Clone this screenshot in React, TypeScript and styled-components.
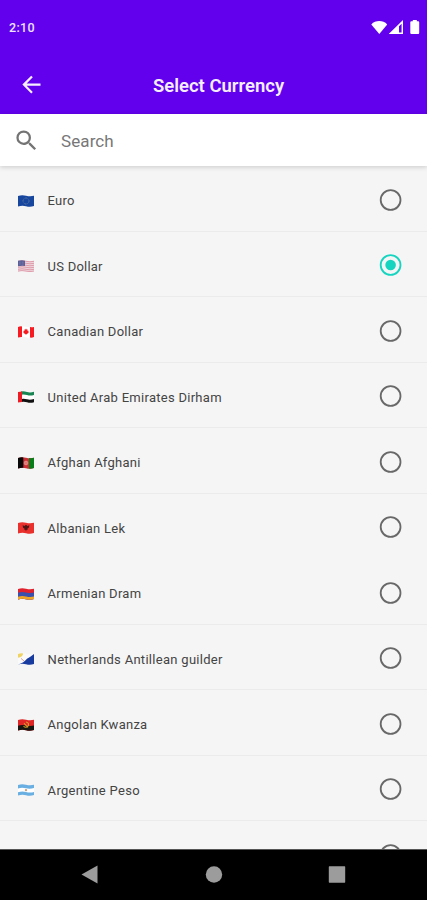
import React, { useState } from 'react';
import styled, { createGlobalStyle } from 'styled-components';

const GlobalStyle = createGlobalStyle`
  * { box-sizing: border-box; }
  body { margin: 0; background: #f5f5f5; }
`;

const Screen = styled.div`
  display: flex;
  flex-direction: column;
  width: 427px;
  height: 900px;
  overflow: hidden;
  background: #f5f5f5;
  font-family: Roboto, 'Liberation Sans', sans-serif;
`;

const StatusBar = styled.div`
  display: flex;
  flex: none;
  align-items: center;
  justify-content: space-between;
  height: 56px;
  padding: 0 6px 0 9px;
  background: #6200ee;
`;

const Clock = styled.span`
  color: #eee3ff;
  font-size: 12.5px;
  font-weight: 500;
  letter-spacing: 0.3px;
  line-height: 16px;
`;

const StatusIcons = styled.svg`
  display: block;
  width: 50px;
  height: 16px;
`;

const AppBar = styled.header`
  display: grid;
  flex: none;
  grid-template-columns: 64px 1fr 54px;
  align-items: center;
  height: 58px;
  background: #6200ee;
`;

const BackButton = styled.button`
  display: flex;
  padding: 0 0 0 20px;
  border: 0;
  background: none;
`;

const Title = styled.h1`
  margin: 0;
  padding-top: 1px;
  color: #f5eeff;
  font-size: 18.5px;
  font-weight: 600;
  line-height: 24px;
  text-align: center;
  white-space: nowrap;
`;

const SearchBar = styled.label`
  position: relative;
  z-index: 1;
  display: flex;
  flex: none;
  align-items: center;
  gap: 21px;
  height: 52px;
  padding: 1px 16px 0 13px;
  background: #fff;
  box-shadow: 0 1px 5px rgba(0, 0, 0, 0.18);
`;

const SearchInput = styled.input`
  flex: 1;
  min-width: 0;
  padding: 1px 0 0;
  border: 0;
  outline: 0;
  background: transparent;
  color: #444;
  font: 400 17px/22px Roboto, sans-serif;
  letter-spacing: 0.1px;
  &::placeholder { color: #777; opacity: 1; }
`;

const CurrencyList = styled.div`
  flex: 1;
  min-height: 0;
  padding-top: 0.4px;
  overflow: hidden;
`;

const CurrencyRow = styled.div<{ $divided: boolean }>`
  display: grid;
  grid-template-columns: 16px 1fr 24px;
  column-gap: 13.6px;
  align-items: center;
  height: 65.5px;
  padding: 2px 24px 0 18px;
  border-bottom: 1px solid ${(p) => (p.$divided ? '#ebebeb' : 'transparent')};
`;

const FlagIcon = styled.svg`
  display: block;
  width: 16px;
  height: 12px;
  margin-top: 2px;
`;

const CurrencyName = styled.span<{ $spacing: number }>`
  margin-top: 3px;
  color: #444;
  font-size: 13px;
  letter-spacing: ${(p) => p.$spacing}px;
  line-height: 18px;
  white-space: nowrap;
`;

const RadioButton = styled.button`
  display: flex;
  padding: 0;
  border: 0;
  background: none;
`;

const NavBar = styled.nav`
  display: grid;
  flex: none;
  grid-template-columns: 180px 67px 180px;
  align-items: center;
  justify-items: center;
  height: 51px;
  border-top: 1px solid #555;
  background: #000;
`;

const NavIcon = styled.svg`
  display: block;
  width: 20px;
  height: 20px;
`;

type FlagCode = 'eu' | 'us' | 'ca' | 'ae' | 'af' | 'al' | 'am' | 'bq' | 'ao' | 'ar' | 'aw';

const flags: Record<FlagCode, React.ReactNode> = {
  eu: (
    <>
      <path fill="#17469e" d={wave(0, 12)} />
      <circle cx="8" cy="6" r="3" fill="none" stroke="#7f92a0" strokeWidth=".8" strokeDasharray=".8 .77" />
    </>
  ),
  us: (
    <>
      <path fill="#eed8df" d={wave(0, 12)} />
      <path fill="none" stroke="#d98a9b" strokeWidth=".8" d="M0 1.3Q4 .3 8 1.3T16 1.3M0 3.3Q4 2.3 8 3.3T16 3.3M0 5.3Q4 4.3 8 5.3T16 5.3M0 7.3Q4 6.3 8 7.3T16 7.3M0 9.3Q4 8.3 8 9.3T16 9.3M0 11.1Q4 10.1 8 11.1T16 11.1" />
      <path fill="#5b5f98" d="M0 .8Q4-.1 7 .7V6Q4 5.3 0 6.2z" />
      <path stroke="#9ea0c2" strokeWidth=".5" strokeDasharray=".7 .8" d="M1 2.2h5M1 4h5" />
    </>
  ),
  ca: (
    <>
      <path fill="#fff" d={wave(0, 12)} />
      <path fill="#f51b20" d="M0 .9Q2 .2 4 .4V11Q2 10.9 0 11.6zM12 1.1Q14 1.4 16 .9V11.1Q14 11.9 12 11.6zM8 2.4l.8 1.4.9-.4-.2 1.6 1.2-.2-.4 1.5.5.5-2 1.2H8.3V9h-.6V8H7.2l-2-1.2.5-.5-.4-1.5 1.2.2-.2-1.6.9.4z" />
    </>
  ),
  ae: (
    <>
      <path fill="#fff" d={wave(0, 12)} />
      <path fill="#178451" d="M3 .5Q6 0 9 1T16 .8V4Q12 5 9 4T3 3.7z" />
      <path fill="#111" d="M3 8Q6 7.3 9 8.3T16 8V11.2Q12 12.2 9 11.2T3 11z" />
      <path fill="#ed1c24" d="M0 .9L4 .4V10.9L0 11.6z" />
    </>
  ),
  af: (
    <>
      <path fill="#c92f35" d={wave(0, 12)} />
      <path fill="#090909" d="M0 .9Q3 0 5.3.4V10.9Q3 10.7 0 11.6z" />
      <path fill="#087d18" d="M11 1.1Q14 1.5 16 .8V11.1Q13 12 11 11.6z" />
      <circle cx="8" cy="6" r="1.9" fill="#e37572" stroke="#f2aaa4" strokeWidth=".5" />
    </>
  ),
  al: (
    <>
      <path fill="#e9302d" d={wave(0, 12)} />
      <path fill="#4e1517" d="M4.6 3.3l2.1.6.5-1.1.8.8.8-.8.5 1.1 2.1-.6-.6 2.4-1.5 1 .4 1.3-1.2-.3L8 9.4l-.6-1.7-1.1.3.3-1.3-1.5-1z" />
    </>
  ),
  am: (
    <>
      <path fill="#df222d" d={wave(0, 12)} />
      <path fill="#3951ad" d={wave(3.8, 12)} />
      <path fill="#efa526" d={wave(7.8, 12)} />
    </>
  ),
  bq: (
    <>
      <path fill="#fafafa" d={wave(0, 12)} />
      <path fill="#183b9f" d="M16 .9V11.1Q12 12.3 8 11.2T0 11.5Q6 9.7 9 5.8Q12 4 16 .9z" />
      <path fill="#f0d365" d="M0 .9Q3 0 5.1.5Q5 3.8 0 4.8z" />
      <path stroke="#d4a09f" d="M3 5.4l3 2.6" />
    </>
  ),
  ao: (
    <>
      <path fill="#df2525" d={wave(0, 12)} />
      <path fill="#191510" d={wave(5.8, 12)} />
      <path fill="none" stroke="#d5a029" strokeWidth="1.1" d="M8 3q4 1 1.8 4.4Q8 9.2 5.5 7.4M6 4.4l4 4" />
    </>
  ),
  ar: (
    <>
      <path fill="#69afe2" d={wave(0, 12)} />
      <path fill="#fff" d="M0 4.4Q4 3.3 8 4.3T16 4V8Q12 9 8 8T0 8.3z" />
      <circle cx="8" cy="6.1" r="1.2" fill="#c7a282" />
    </>
  ),
  aw: <path fill="#4189dd" d={wave(0, 12)} />,
};

/** Outline of a waving flag band between two heights. */
function wave(top: number, bottom: number) {
  return `M0 ${top + 0.9}Q4 ${top - 0.4} 8 ${top + 0.7}T16 ${top + 0.8}V${bottom - 0.9}Q12 ${bottom + 0.4} 8 ${bottom - 0.8}T0 ${bottom - 0.4}z`;
}

interface Currency {
  flag: FlagCode;
  name: string;
  spacing: number;
  divided: boolean;
}

const currencies: Currency[] = [
  { flag: 'eu', name: 'Euro', spacing: 0.2, divided: true },
  { flag: 'us', name: 'US Dollar', spacing: 0.22, divided: true },
  { flag: 'ca', name: 'Canadian Dollar', spacing: 0.28, divided: true },
  { flag: 'ae', name: 'United Arab Emirates Dirham', spacing: 0.28, divided: true },
  { flag: 'af', name: 'Afghan Afghani', spacing: 0.25, divided: true },
  { flag: 'al', name: 'Albanian Lek', spacing: 0.28, divided: false },
  { flag: 'am', name: 'Armenian Dram', spacing: 0.28, divided: true },
  { flag: 'bq', name: 'Netherlands Antillean guilder', spacing: 0.29, divided: true },
  { flag: 'ao', name: 'Angolan Kwanza', spacing: 0.25, divided: true },
  { flag: 'ar', name: 'Argentine Peso', spacing: 0.31, divided: true },
  { flag: 'aw', name: '', spacing: 0.3, divided: false },
];

function Radio({ checked, onClick }: { checked: boolean; onClick: () => void }) {
  const color = checked ? '#16d5c0' : '#686868';
  return (
    <RadioButton role="radio" aria-checked={checked} onClick={onClick}>
      <svg width="24" height="24" viewBox="0 0 24 24">
        <circle cx="11.6" cy="12" r="9.9" fill="none" stroke={color} strokeWidth="1.8" />
        {checked && <circle cx="11.6" cy="12" r="5.3" fill={color} />}
      </svg>
    </RadioButton>
  );
}

export default function App() {
  const [selected, setSelected] = useState<FlagCode>('us');
  return (
    <>
      <GlobalStyle />
      <Screen>
        <StatusBar>
          <Clock>2:10</Clock>
          <StatusIcons viewBox="0 0 50 16" fill="#fff">
            <path d="M0.3 4.4C4.5 0 12 0 16.2 4.4L8.3 14z" />
            <path fillRule="evenodd" d="M17.7 14L32 0v14zM28 6.3v6.2h2.6V3.8z" />
            <path d="M41.8 0h4v1.3h1.4q1 0 1 1V13q0 1-1 1h-6.9q-1 0-1-1V2.3q0-1 1-1h1.5z" />
          </StatusIcons>
        </StatusBar>
        <AppBar>
          <BackButton aria-label="Back">
            <svg width="24" height="24" viewBox="0 0 24 24" fill="none" stroke="#f6efff" strokeWidth="2.2">
              <path d="M20.5 11.6H4.5M12 3.5L3.9 11.6l8.1 8.1" />
            </svg>
          </BackButton>
          <Title>Select Currency</Title>
        </AppBar>
        <SearchBar>
          <svg width="27" height="27" viewBox="0 0 24 24" fill="#747474">
            <path d="M15.5 14h-.79l-.28-.27A6.47 6.47 0 0 0 16 9.5 6.5 6.5 0 1 0 9.5 16c1.61 0 3.09-.59 4.23-1.57l.27.28v.79l5 4.99L20.49 19zm-6 0A4.5 4.5 0 1 1 14 9.5 4.49 4.49 0 0 1 9.5 14z" />
          </svg>
          <SearchInput placeholder="Search" />
        </SearchBar>
        <CurrencyList role="radiogroup">
          {currencies.map((c) => (
            <CurrencyRow key={c.flag} $divided={c.divided}>
              <FlagIcon viewBox="0 0 16 12">{flags[c.flag]}</FlagIcon>
              <CurrencyName $spacing={c.spacing}>{c.name}</CurrencyName>
              <Radio checked={selected === c.flag} onClick={() => setSelected(c.flag)} />
            </CurrencyRow>
          ))}
        </CurrencyList>
        <NavBar>
          <NavIcon viewBox="0 0 20 20" fill="#9c9c9c"><path d="M1.5 9.5L17.5 .6v17.8z" /></NavIcon>
          <NavIcon viewBox="0 0 20 20" fill="#9c9c9c"><circle cx="10" cy="9.5" r="8.2" /></NavIcon>
          <NavIcon viewBox="0 0 20 20" fill="#9c9c9c"><rect x="1.8" y="1.3" width="16.4" height="16.4" rx=".6" /></NavIcon>
        </NavBar>
      </Screen>
    </>
  );
}
